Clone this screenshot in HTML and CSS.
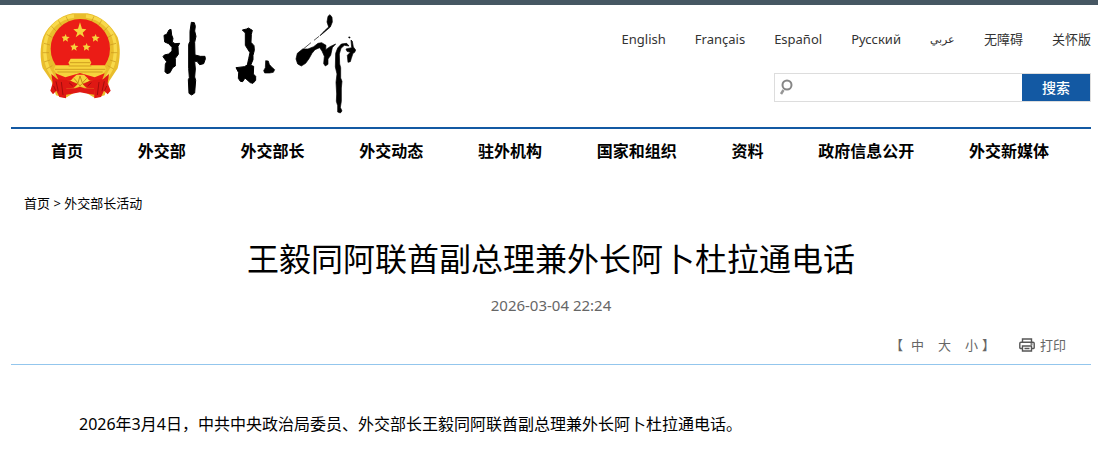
FILE: index.html
```html
<!DOCTYPE html>
<html lang="zh-CN">
<head>
  <meta charset="utf-8">
  <title>王毅同阿联酋副总理兼外长阿卜杜拉通电话</title>
  <link rel="stylesheet" href="styles.css">
</head>
<body>
  <div class="topbar"></div>
  <div class="wrap">
    <header class="header">
      <a class="logo" href="#" aria-label="外交部">
        <svg width="340" height="110" viewBox="30 5 340 110">
          <!-- emblem -->
          <g transform="translate(30 0) scale(.33333)">
            <path fill="#e9bd2c" d="M128 40H172C214 48 246 79 263 112C273 145 270 178 263 205L238 243L224 286L195 294L150 268L106 294L78 286L64 243L38 205C30 178 29 140 40 110C57 74 88 48 128 40Z"/>
            <path fill="none" stroke="#f8d94b" stroke-width="10" d="M132 48C88 53 52 84 46 128C40 166 49 201 68 229M168 48C212 53 248 84 255 128C260 166 251 201 232 229"/>
            <path fill="none" stroke="#c7951c" stroke-width="2" d="M108 49L116 66M85 61L95 77M65 79L78 93M50 103L66 112M42 130L60 135M38 158L57 158M42 186L60 180M49 207L67 197M192 49L184 66M215 61L205 77M235 79L222 93M250 103L234 112M258 130L240 135M262 158L243 158M258 186L240 180M251 207L233 197"/>
            <circle cx="151" cy="146" r="89" fill="#eb1c16"/>
            <g fill="#f7d43c">
              <path d="M150 67L156 86L169 88L158 98L163 112L150 103L137 112L142 98L130 88L144 86Z"/>
              <path id="star" d="M107 102L110 110L119 111L112 117L114 125L106 120L99 125L100 116L95 110L104 109Z"/>
              <use href="#star" x="26" y="27"/>
              <use href="#star" x="63" y="27"/>
              <use href="#star" x="90"/>
              <path d="M122 176H178L184 188L180 196H224L229 209L213 228L180 235L150 226L119 235L87 228L71 209L77 196H119L115 188Z"/>
            </g>
            <path fill="none" stroke="#bd8514" stroke-width="2" d="M120 188H181M116 198H184M75 208H226M82 216H218"/>
            <path fill="#eb1c16" d="M76 220L106 232L137 223L150 219L163 223L194 232L224 220L216 241L86 241Z"/>
            <path fill="#f7d43c" d="M129 234L140 224H162L172 234L181 246L169 258L150 263L131 258L119 246Z"/>
            <path fill="none" stroke="#c58c17" stroke-width="3" d="M132 235L144 249L150 228L157 249L170 235M126 248L145 251L150 258L156 251L176 248"/>
            <path fill="#df1813" d="M64 222L82 238L119 241L143 253L130 265L109 264L108 295L88 291L79 272L69 283L61 272L68 249ZM237 222L219 238L182 241L158 253L171 265L192 264L193 295L213 291L222 272L233 283L242 272L233 249Z"/>
            <path fill="none" stroke="#a10e0c" stroke-width="3" d="M78 244L85 274M94 246L99 285M71 258L77 272M223 244L216 274M207 246L202 285M230 258L224 272M117 248L128 258M184 248L173 258"/>
            <path fill="#e9bd2c" d="M110 265L136 263L150 257L164 263L191 265L190 290L177 277L150 273L123 277L110 292Z"/>
            <path fill="#df1813" d="M108 265L136 265L150 260L164 265L193 265V284L178 282L150 277L122 282L108 284Z"/>
          </g>
          <!-- brush lettering -->
          <g transform="translate(150 5) scale(.33333)" stroke="#000" stroke-width="3" stroke-linejoin="round">
            <path d="M57 75L63 73L65 90L69 100L67 111L75 116L89 115L84 124L85 148L76 160L76 183L68 188L60 203L51 206L45 200L46 178L50 170L39 155L43 150L56 147L66 138L66 127L56 116L44 111L42 91L50 88Z"/>
            <path d="M124 52L133 53L136 64L134 78L138 94L134 112L135 150L151 154L165 154L166 162L161 176L149 179L141 169L134 169L136 192L134 216L137 226L134 264L125 270L117 265L115 224L118 218L116 190V118L120 109V79Z"/>
            <path d="M277 75L290 72L295 69L307 76L304 88L303 112L312 122L313 136L309 151L309 164L302 181L311 184L310 207L317 214L317 226L309 235L301 233L285 219L278 230L271 229L265 220L266 203L258 188L283 185L292 180L296 161L300 143L286 121L286 84Z"/>
          </g>
          <g transform="translate(230 5) scale(.33333)" stroke="#000" stroke-width="2" stroke-linejoin="round">
            <path d="M107 167L115 168L118 178L124 185L134 194L130 202L119 204H104L101 197L106 188Z"/>
            <path d="M300 29L306 37L307 51L301 66L286 79L270 92L283 78L296 66L291 51L294 34Z"/>
            <path fill="none" d="M267 94L252 106M243 113L220 132"/>
            <path d="M218 132L234 132L251 125L264 115L275 113L288 121L287 134L300 125L317 117L307 128L302 151L294 162V178L286 183L281 176L283 154L276 138L269 128L255 134L246 145L237 161L227 175L214 183L203 177L198 162L202 145Z"/>
            <path d="M317 145L323 129L334 117L350 115L357 123L343 121L333 130L328 147L329 177L332 188V219L336 229L334 249V289L331 307L336 318L331 324L323 321V302L319 289L320 267L318 232L321 207L316 186Z"/>
            <path d="M356 96L360 96L360 99L357 99ZM363 105L367 109L370 126L377 135L374 142L369 145L364 160L361 170L354 172L352 151L361 142L351 139L348 132L365 128Z"/>
          </g>
        </svg>
      </a>
      <div class="header-right">
        <nav class="langs">
          <a href="#">English</a>
          <a href="#">Français</a>
          <a href="#">Español</a>
          <a href="#">Русский</a>
          <a href="#" lang="ar">عربي</a>
          <a href="#">无障碍</a>
          <a href="#">关怀版</a>
        </nav>
        <form class="search">
          <svg class="search-icon" width="14" height="18" viewBox="0 0 14 18">
            <circle cx="8" cy="6" r="4.5" fill="none" stroke="#868686" stroke-width="2"/>
            <path d="M4.5 11L2 15" stroke="#969696" stroke-width="2.5"/>
          </svg>
          <input type="text" aria-label="搜索">
          <button type="button">搜索</button>
        </form>
      </div>
    </header>

    <nav class="menu">
      <a href="#">首页</a>
      <a href="#">外交部</a>
      <a href="#">外交部长</a>
      <a href="#">外交动态</a>
      <a href="#">驻外机构</a>
      <a href="#">国家和组织</a>
      <a href="#">资料</a>
      <a href="#">政府信息公开</a>
      <a href="#">外交新媒体</a>
    </nav>

    <div class="crumbs"><a href="#">首页</a> &gt; <a href="#">外交部长活动</a></div>

    <main>
      <h1>王毅同阿联酋副总理兼外长阿卜杜拉通电话</h1>
      <p class="time">2026-03-04 22:24</p>
      <div class="tools">
        <div class="sizes">
          <span>【</span>
          <button type="button">中</button>
          <button type="button">大</button>
          <button type="button">小</button>
          <span>】</span>
        </div>
        <button type="button" class="print">
          <svg width="16" height="14" viewBox="0 0 16 14" fill="none" stroke="#555" stroke-width="1.4">
            <path d="M3.5 4V1H12.5V4M3.5 10.5H1.5Q.8 10.5 .8 9.8V5.5Q.8 4.2 2 4.2H14Q15.2 4.2 15.2 5.5V9.8Q15.2 10.5 14.5 10.5H12.5M3.5 8H12.5V13H3.5ZM5.5 10.5H10.5M11.5 6H13.5"/>
          </svg>
          打印
        </button>
      </div>
      <div class="content">
        <p>2026年3月4日，中共中央政治局委员、外交部长王毅同阿联酋副总理兼外长阿卜杜拉通电话。</p>
      </div>
    </main>
  </div>
</body>
</html>
```
FILE: styles.css
```css
* { box-sizing: border-box; }
body { margin: 0; background: #fff; color: #000; font-family: "Noto Sans", "Noto Sans CJK SC", sans-serif; }
a { color: inherit; text-decoration: none; }
button { padding: 0; border: none; background: none; color: inherit; font: inherit; cursor: pointer; }
svg { display: block; }

.topbar { height: 5px; background: #465763; }
.wrap { margin: 0 7px 0 11px; }

.header { display: flex; justify-content: space-between; height: 122px; }
.logo { margin-left: 19px; }
.header-right { padding-top: 24px; }
.langs { display: flex; justify-content: flex-end; gap: 29px; color: #333; font-size: 13px; line-height: 20px; }
.langs a:lang(ar) { font-size: 11px; }

.search { display: flex; align-items: center; width: 317px; height: 29px; margin: 24px 0 0 auto; border: 1px solid #ddd; }
.search-icon { margin-left: 4px; }
.search input { flex: 1; min-width: 0; height: 27px; padding: 0 6px; border: none; outline: none; background: none; font: inherit; font-size: 14px; }
.search button { width: 68px; height: 27px; background: #1359a3; color: #fff; font-size: 14px; font-weight: 500; line-height: 27px; }

.menu { display: flex; justify-content: space-between; padding: 10px 42px 0 40px; border-top: 2px solid #1359a3; font-size: 16px; font-weight: bold; line-height: 24px; }

.crumbs { margin: 30px 0 0 13px; font-size: 13px; line-height: 20px; }

h1 { margin: 21px 0 0; font-size: 32px; font-weight: normal; line-height: 50px; text-align: center; }
.time { margin: 11px 0 0; color: #666; font-size: 15px; line-height: 20px; text-align: center; }
.tools { display: flex; justify-content: flex-end; gap: 24px; padding: 20px 25px 9px 0; border-bottom: 1px solid #93c6ed; color: #666; font-size: 13px; line-height: 20px; }
.sizes { display: flex; gap: 14px; }
.sizes span:first-child { margin-right: -6px; }
.sizes span:last-child { margin-left: -10px; }
.print { display: flex; align-items: center; gap: 5px; }

.content { padding: 43px 36px 20px; font-size: 16px; line-height: 32px; }
.content p { margin: 0; text-indent: 2em; }
```
